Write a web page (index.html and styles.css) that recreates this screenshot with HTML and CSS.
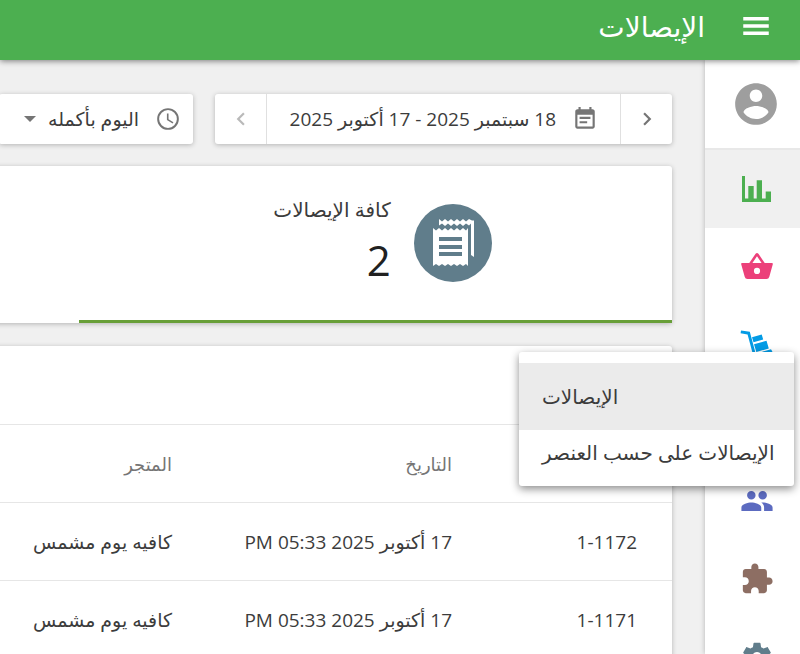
FILE: index.html
```html
<!DOCTYPE html>
<html lang="ar" dir="rtl">
<head>
<meta charset="utf-8">
<meta name="viewport" content="width=device-width, initial-scale=1">
<title>الإيصالات</title>
<link rel="stylesheet" href="styles.css">
</head>
<body>
<header class="topbar">
  <button class="menu-button" type="button" aria-label="القائمة">
    <svg class="icon-nav" viewBox="0 0 24 24"><path d="M3 18.300h18v-2.500H3zm0-5h18v-2.500H3zm0-7.600v2.500h18V5.700z"/></svg>
  </button>
  <h1 class="title">الإيصالات</h1>
</header>
<div class="layout">
  <nav class="sidebar">
    <a class="account" href="#" aria-label="الحساب">
      <svg class="icon-account" viewBox="0 0 24 24"><path d="M12 2C6.480 2 2 6.480 2 12s4.480 10 10 10 10-4.480 10-10S17.520 2 12 2zm0 3c1.660 0 3 1.340 3 3s-1.340 3-3 3-3-1.340-3-3 1.340-3 3-3zm0 14.200c-2.500 0-4.710-1.280-6-3.220.03-1.990 4-3.080 6-3.080 1.990 0 5.970 1.090 6 3.080-1.290 1.940-3.500 3.220-6 3.220z"/></svg>
    </a>
    <a class="nav-item nav-item-active reports" href="#" aria-label="التقارير">
      <svg class="icon-nav" viewBox="0 0 34 34"><path d="M2 4h3v22.500h3.300V14h5.400v12.500h3V8.300H22v18.200h3.700V19.500H31V30H2z"/></svg>
    </a>
    <a class="nav-item items" href="#" aria-label="العناصر">
      <svg class="icon-nav" viewBox="0 0 34 34"><path fill-rule="evenodd" d="M2 13h7.300l6.300-9.300q1.400-1.600 2.800 0L24.700 13H32q1 0 .8 1.200l-3.500 12.600Q28.700 29 26.500 29h-19q-2.200 0-2.800-2.200L1.200 14.200Q1 13 2 13zm10.400 0h9.200L17 6.300zM17 17.800a3.100 3.100 0 1 0 0 6.200 3.100 3.100 0 0 0 0-6.200z"/></svg>
    </a>
    <a class="nav-item stock" href="#" aria-label="المخزون">
      <svg class="icon-nav" viewBox="0 0 34 34"><path d="M1 2.500l8.800 1.300 5.400 19.900-2.800.8L7.600 6.600.6 5.200zM12 9.300l9.700-2.800 1.500 5-9.700 2.800zM14 16.300l12.500-3.500 2.300 7.700-12.500 3.500zM17.500 25.200L31 21.200l1.500 2.600-14 4.100z"/><circle cx="15.500" cy="27.500" r="3.500"/></svg>
    </a>
    <a class="nav-item" href="#" aria-label="الموظفون"></a>
    <a class="nav-item customers" href="#" aria-label="العملاء">
      <svg class="icon-nav" viewBox="0 0 24 24"><path d="M16 11c1.660 0 2.990-1.340 2.990-3S17.660 5 16 5c-1.660 0-3 1.340-3 3s1.340 3 3 3zm-8 0c1.660 0 2.990-1.340 2.990-3S9.660 5 8 5C6.340 5 5 6.340 5 8s1.340 3 3 3zm0 2c-2.330 0-7 1.170-7 3.500V19h14v-2.500c0-2.330-4.670-3.500-7-3.500zm8 0c-.29 0-.62.02-.97.05 1.160.84 1.970 1.970 1.970 3.450V19h6v-2.500c0-2.330-4.670-3.500-7-3.500z"/></svg>
    </a>
    <a class="nav-item extensions" href="#" aria-label="الإضافات">
      <svg class="icon-nav" viewBox="0 0 24 24"><path d="M20.500 11H19V7c0-1.100-.9-2-2-2h-4V3.500C13 2.120 11.880 1 10.500 1S8 2.120 8 3.500V5H4c-1.100 0-1.990.9-1.990 2v3.800H3.500c1.490 0 2.700 1.210 2.700 2.700s-1.210 2.700-2.700 2.700H2V20c0 1.100.9 2 2 2h3.800v-1.500c0-1.490 1.210-2.700 2.700-2.700 1.490 0 2.700 1.210 2.700 2.700V22H17c1.100 0 2-.9 2-2v-4h1.500c1.380 0 2.500-1.120 2.500-2.500S21.880 11 20.500 11z"/></svg>
    </a>
    <a class="nav-item settings" href="#" aria-label="الإعدادات">
      <svg class="icon-nav" viewBox="0 0 24 24"><path d="M19.430 12.980c.04-.32.07-.64.07-.98s-.03-.66-.07-.98l2.110-1.650c.19-.15.24-.42.12-.64l-2-3.460c-.12-.22-.39-.3-.61-.22l-2.490 1c-.52-.4-1.080-.73-1.690-.98l-.38-2.650C14.460 2.180 14.250 2 14 2h-4c-.25 0-.46.18-.49.42l-.38 2.650c-.61.25-1.170.59-1.690.98l-2.490-1c-.23-.09-.49 0-.61.22l-2 3.460c-.13.22-.07.49.12.64l2.110 1.650c-.04.32-.07.65-.07.98s.03.66.07.98l-2.110 1.650c-.19.15-.24.42-.12.64l2 3.460c.12.22.39.3.61.22l2.490-1c.52.4 1.080.73 1.690.98l.38 2.650c.03.24.24.42.49.42h4c.25 0 .46-.18.49-.42l.38-2.650c.61-.25 1.170-.59 1.690-.98l2.490 1c.23.09.49 0 .61-.22l2-3.460c.12-.22.07-.49-.12-.64l-2.110-1.650zM12 15.500c-1.930 0-3.500-1.570-3.500-3.500s1.570-3.500 3.500-3.500 3.500 1.570 3.500 3.500-1.570 3.500-3.500 3.500z"/></svg>
    </a>
  </nav>
  <main class="content">
    <div class="filters">
      <div class="control date-range">
        <button class="step" type="button" aria-label="السابق">
          <svg class="icon" viewBox="0 0 24 24"><path d="M10 6L8.590 7.410 13.170 12l-4.580 4.590L10 18l6-6z"/></svg>
        </button>
        <button class="range" type="button">
          <svg class="icon" viewBox="0 0 24 24"><path d="M17 10H7v2h10v-2zm2-7h-1V1h-2v2H8V1H6v2H5c-1.110 0-1.990.9-1.990 2L3 19c0 1.100.89 2 2 2h14c1.100 0 2-.9 2-2V5c0-1.100-.9-2-2-2zm0 16H5V8h14v11zm-5-5H7v2h7v-2z"/></svg>
          <span>18 سبتمبر 2025 - 17 أكتوبر 2025</span>
        </button>
        <button class="step" type="button" aria-label="التالي" disabled>
          <svg class="icon" viewBox="0 0 24 24"><path d="M14 6l1.410 1.410L10.830 12l4.580 4.590L14 18l-6-6z"/></svg>
        </button>
      </div>
      <button class="control hours" type="button">
        <svg class="icon" viewBox="0 0 24 24"><path d="M12 2a10 10 0 1 0 0 20 10 10 0 0 0 0-20zm0 18.200a8.200 8.200 0 1 1 0-16.400 8.200 8.200 0 0 1 0 16.400zM12.500 7H11v6l5.250 3.150.75-1.230-4.500-2.670z"/></svg>
        <span>اليوم بأكمله</span>
        <svg class="caret" viewBox="0 0 12 6"><path d="M0 0h12L6 6z"/></svg>
      </button>
    </div>
    <section class="card summary">
      <button class="tab" type="button">
        <svg class="receipts" viewBox="0 0 78 78">
          <circle class="disc" cx="39" cy="39" r="39"/>
          <path d="M25 15l3 2.500 3-2.500 3 2.500 3-2.500 3 2.500 3-2.500 3 2.500 3-2.500 3 2.500 3-2.500 3 1.500h2V53l-3-2V19.500l-2 2-3-2-3 2.500-3-2.500-3 2.500-3-2.500-3 2.500-3-2.500-3 2.500-3-2.500-3 2z"/>
          <path d="M19 24l3 2.500 3-2.500 3 2.500 3-2.500 3 2.500 3-2.500 3 2.500 3-2.500 3 2.500 3-2.500 3 2.500 2-2.500v38l-2-2-3 2-3-2-3 2-3-2-3 2-3-2-3 2-3-2-3 2-3-2-3 2z"/>
          <path class="disc" d="M25 33h23v4H25zm0 8h23v4H25zm0 7h23v4H25z"/>
        </svg>
        <span class="tab-text">
          <span>كافة الإيصالات</span>
          <span class="count">2</span>
        </span>
      </button>
    </section>
    <section class="card listing">
      <table class="table">
        <thead>
          <tr><td class="col-number"></td><th class="col-date" scope="col">التاريخ</th><th scope="col">المتجر</th></tr>
        </thead>
        <tbody>
          <tr><td>1-1172</td><td>17 أكتوبر 2025 05:33 PM</td><td>كافيه يوم مشمس</td></tr>
          <tr><td>1-1171</td><td>17 أكتوبر 2025 05:33 PM</td><td>كافيه يوم مشمس</td></tr>
        </tbody>
      </table>
    </section>
  </main>
  <div class="submenu">
    <a class="submenu-item submenu-item-active" href="#">الإيصالات</a>
    <a class="submenu-item" href="#">الإيصالات على حسب العنصر</a>
  </div>
</div>
</body>
</html>
```
FILE: styles.css
```css
* {
  box-sizing: border-box;
}

body {
  margin: 0;
  height: 100vh;
  display: flex;
  flex-direction: column;
  overflow: hidden;
  background: #f0f0f0;
  color: #3c3c3c;
  font: 19px/24px "Open Sans", "Noto Sans", "DejaVu Sans", sans-serif;
}

button {
  border: 0;
  padding: 0;
  background: none;
  color: inherit;
  font: inherit;
}

a {
  color: inherit;
  text-decoration: none;
}

svg {
  display: block;
  flex: none;
  fill: currentColor;
}

.topbar {
  position: relative;
  z-index: 2;
  flex: none;
  height: 60px;
  display: flex;
  align-items: center;
  padding-bottom: 8px;
  background: #4caf50;
  color: #fff;
  box-shadow: 0 1px 6px rgba(0, 0, 0, 0.5);
}

.menu-button {
  width: 95px;
  display: flex;
  justify-content: center;
  padding-left: 6px;
}

.title {
  margin: 0;
  font-size: 28px;
  line-height: 36px;
  font-weight: 400;
}

.layout {
  position: relative;
  flex: 1;
  min-height: 0;
  display: flex;
}

.sidebar {
  position: relative;
  flex: 0 0 95px;
  overflow: hidden;
  background: #fff;
  box-shadow: 0 0 5px rgba(0, 0, 0, 0.25);
}

.account,
.nav-item {
  height: 78px;
  display: flex;
  align-items: center;
  justify-content: center;
  padding-left: 8px;
}

.account {
  height: 90px;
  border-bottom: 2px solid #e8e8e8;
  padding-left: 6px;
  color: #9e9e9e;
}

.nav-item-active { background: #f0f0f0; }
.reports { color: #4caf50; }
.items { color: #ec407a; }
.stock { color: #039be5; }
.customers { color: #5c6bc0; }
.extensions { color: #8d6e63; }
.settings { color: #607d8b; }

.icon-account {
  width: 50px;
  height: 50px;
}

.icon-nav {
  width: 34px;
  height: 34px;
}

.icon {
  width: 26px;
  height: 26px;
  color: #757575;
}

.content {
  flex: 1;
  min-width: 0;
  overflow: hidden;
  padding: 34px 33px 0 0;
}

.filters {
  display: flex;
  gap: 22px;
  margin-bottom: 22px;
}

.control,
.card {
  background: #fff;
  border-radius: 3px;
  box-shadow: 0 1px 5px rgba(0, 0, 0, 0.25);
}

.control {
  flex: none;
  height: 50px;
  display: flex;
}

.step {
  width: 51px;
  display: flex;
  align-items: center;
  justify-content: center;
}

.step:disabled {
  opacity: 0.5;
}

.range {
  width: 355px;
  display: flex;
  align-items: center;
  gap: 16px;
  padding: 0 22px;
  border: solid #e0e0e0;
  border-width: 0 1px;
  white-space: nowrap;
}

.hours {
  width: 194px;
  align-items: center;
  gap: 16px;
  padding: 0 12px;
}

.caret {
  width: 12px;
  height: 6px;
  margin-right: -4px;
  color: #757575;
}

.card {
  width: 1186px;
}

.summary {
  height: 157px;
  margin-bottom: 23px;
  display: flex;
}

.tab {
  flex: 0 0 50%;
  display: flex;
  align-items: center;
  justify-content: center;
  gap: 23px;
  padding-left: 14px;
  border-bottom: 3px solid #689f38;
  font-size: 20px;
  text-align: right;
}

.receipts {
  width: 78px;
  height: 78px;
  color: #fff;
}

.disc { fill: #607d8b; }

.tab-text {
  display: flex;
  flex-direction: column;
  gap: 14px;
  padding-bottom: 4px;
}

.count {
  color: #212121;
  font-size: 42px;
  line-height: 48px;
}

.listing {
  padding-top: 78px;
}

.table {
  width: 100%;
  table-layout: fixed;
  border-collapse: collapse;
}

.table th,
.table td {
  height: 78px;
  padding: 0 35px 0 0;
  border-top: 1px solid #e6e6e6;
  text-align: right;
  font-weight: 400;
  white-space: nowrap;
}

.table th {
  color: #757575;
  font-size: 18px;
}

.table .col-number { width: 185px; }
.table .col-date { width: 280px; }

.submenu {
  position: absolute;
  z-index: 3;
  top: 292px;
  right: 6px;
  width: 275px;
  padding: 11px 0;
  background: #fff;
  border-radius: 3px;
  box-shadow: 0 3px 8px rgba(0, 0, 0, 0.45);
  font-size: 20px;
}

.submenu-item {
  height: 45px;
  display: flex;
  align-items: center;
  justify-content: flex-end;
  padding: 0 23px;
  white-space: nowrap;
}

.submenu-item-active {
  height: 67px;
  background: #ebebeb;
}
```
